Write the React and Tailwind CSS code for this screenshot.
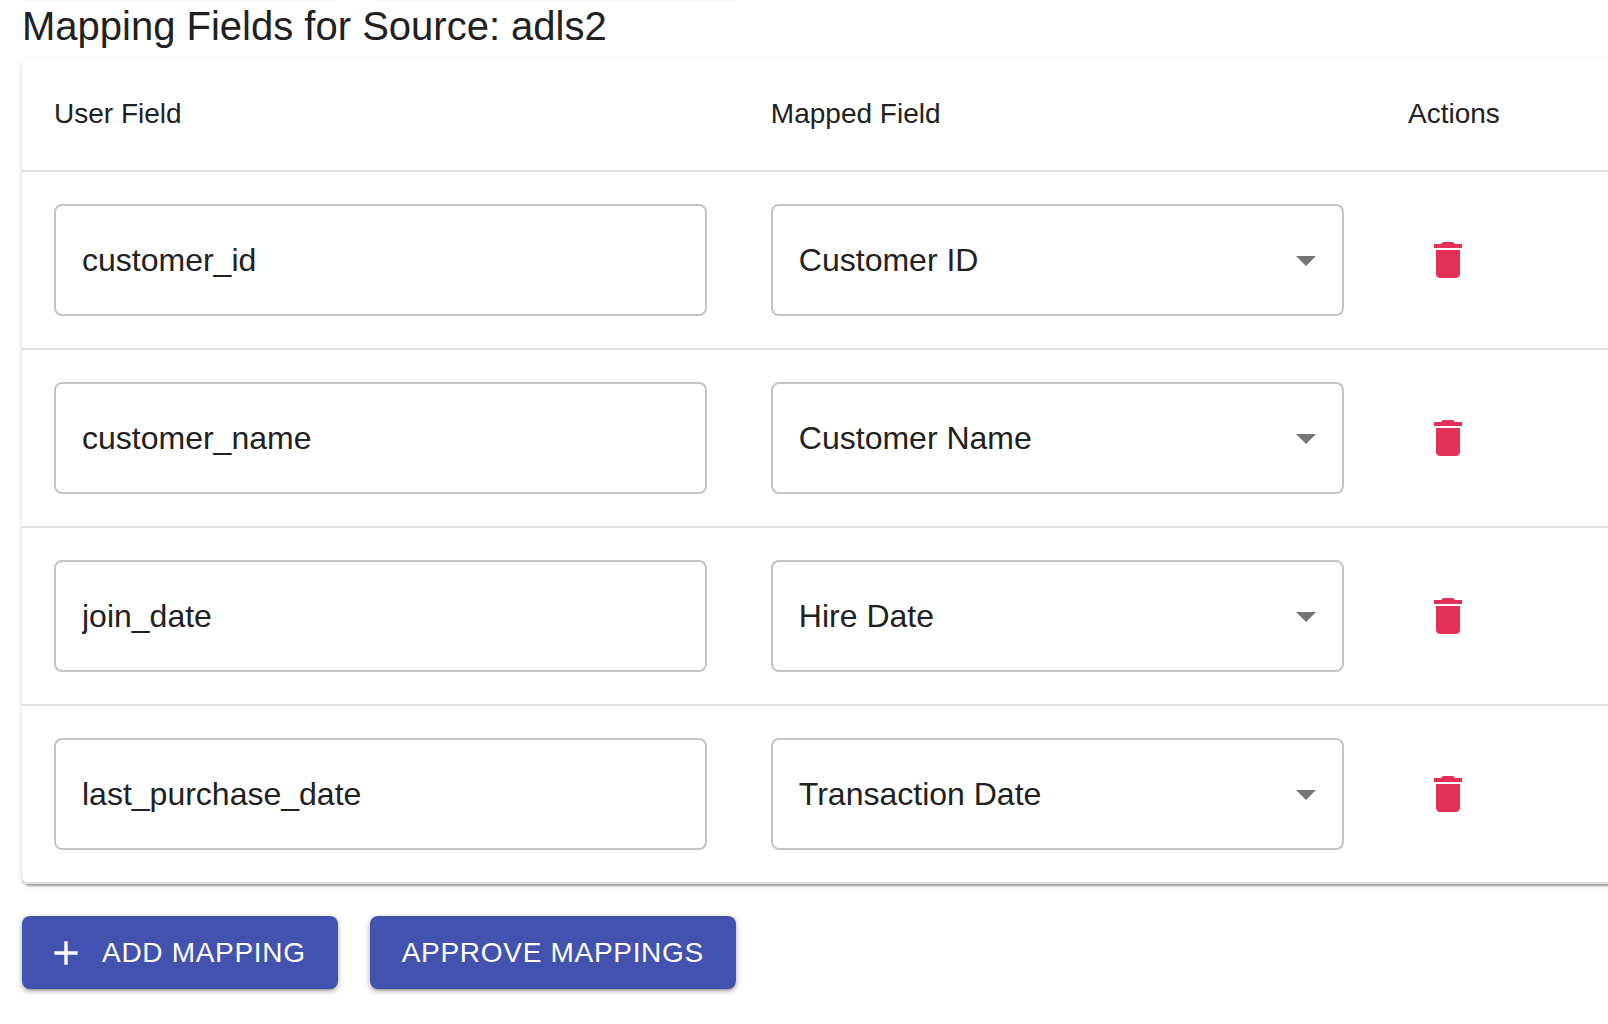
import { useState } from 'react';

const INITIAL = [
  { user: 'customer_id', mapped: 'Customer ID' },
  { user: 'customer_name', mapped: 'Customer Name' },
  { user: 'join_date', mapped: 'Hire Date' },
  { user: 'last_purchase_date', mapped: 'Transaction Date' },
];

const OPTIONS = ['Customer ID', 'Customer Name', 'Hire Date', 'Transaction Date'];

const PAPER_SHADOW =
  'shadow-[0_4px_2px_-2px_rgba(0,0,0,0.2),0_2px_2px_0_rgba(0,0,0,0.14),0_2px_6px_0_rgba(0,0,0,0.12)]';

function Icon({ d, className }) {
  return (
    <svg viewBox="0 0 24 24" fill="currentColor" aria-hidden="true" className={className}>
      <path d={d} />
    </svg>
  );
}

function ContainedButton({ icon, children, onClick }) {
  return (
    <button
      type="button"
      onClick={onClick}
      className="flex items-center gap-4 rounded-lg bg-[#4252af] px-8 py-3 text-[28px] leading-[49px] tracking-wide text-white uppercase shadow-[0_3px_2px_-2px_rgba(0,0,0,0.2),0_2px_4px_0_rgba(0,0,0,0.24),0_2px_10px_0_rgba(0,0,0,0.12)]"
    >
      {icon && <Icon d={icon} className="-ml-2 size-10" />}
      {children}
    </button>
  );
}

export default function App() {
  const [rows, setRows] = useState(INITIAL);
  const update = (i, patch) => setRows(rows.map((r, n) => (n === i ? { ...r, ...patch } : r)));

  return (
    <main className="overflow-hidden bg-white pb-8 pl-[22px] font-['Liberation_Sans',Arial,sans-serif] text-[#212121]">
      {/* Faint lower edges of the controls scrolled out above */}
      <div aria-hidden="true" className="flex h-0.5 gap-10 pl-1">
        <div className="h-px w-[310px] bg-[#f7f7f7]" />
        <div className="h-px w-[360px] bg-[#f7f7f7]" />
      </div>
      <h1 className="pb-2 text-[40px] leading-[48px]">Mapping Fields for Source: adls2</h1>

      <div className={`-mr-[7px] rounded-lg bg-white ${PAPER_SHADOW}`}>
        <table className="w-full table-fixed border-collapse text-left">
          <thead>
            <tr className="border-b-2 border-[#e0e0e0] text-[28px] leading-[48px]">
              <th scope="col" className="w-[45%] p-8 font-normal">User Field</th>
              <th scope="col" className="w-[40%] p-8 font-normal">Mapped Field</th>
              <th scope="col" className="w-[15%] p-8 font-normal">Actions</th>
            </tr>
          </thead>
          <tbody>
            {rows.map((row, i) => (
              <tr key={i} className="border-b-2 border-[#e0e0e0] text-[32px]">
                <td className="p-8">
                  <input
                    type="text"
                    aria-label="User Field"
                    value={row.user}
                    onChange={(e) => update(i, { user: e.target.value })}
                    className="block h-28 w-full rounded-lg border-2 border-[#c4c4c4] px-[26px]"
                  />
                </td>
                <td className="p-8">
                  <div className="relative">
                    <select
                      aria-label="Mapped Field"
                      value={row.mapped}
                      onChange={(e) => update(i, { mapped: e.target.value })}
                      className="block h-28 w-full appearance-none rounded-lg border-2 border-[#c4c4c4] pr-16 pl-[26px]"
                    >
                      {OPTIONS.map((o) => (
                        <option key={o}>{o}</option>
                      ))}
                    </select>
                    <Icon
                      d="M7 10l5 5 5-5z"
                      className="pointer-events-none absolute inset-y-0 right-3.5 my-auto size-12 text-[#757575]"
                    />
                  </div>
                </td>
                <td className="px-8">
                  <button
                    type="button"
                    aria-label={`Delete ${row.user}`}
                    onClick={() => setRows(rows.filter((_, n) => n !== i))}
                    className="block rounded-full p-4 text-[#e33059]"
                  >
                    <Icon
                      d="M6 19c0 1.1.9 2 2 2h8c1.100 0 2-.9 2-2V7H6v12zM19 4h-3.500l-1-1h-5l-1 1H5v2h14V4z"
                      className="size-12"
                    />
                  </button>
                </td>
              </tr>
            ))}
          </tbody>
        </table>
      </div>

      <div className="mt-8 flex gap-8">
        <ContainedButton
          icon="M19 13h-6v6h-2v-6H5v-2h6V5h2v6h6v2z"
          onClick={() => setRows([...rows, { user: '', mapped: OPTIONS[0] }])}
        >
          Add Mapping
        </ContainedButton>
        <ContainedButton>Approve Mappings</ContainedButton>
      </div>
    </main>
  );
}
